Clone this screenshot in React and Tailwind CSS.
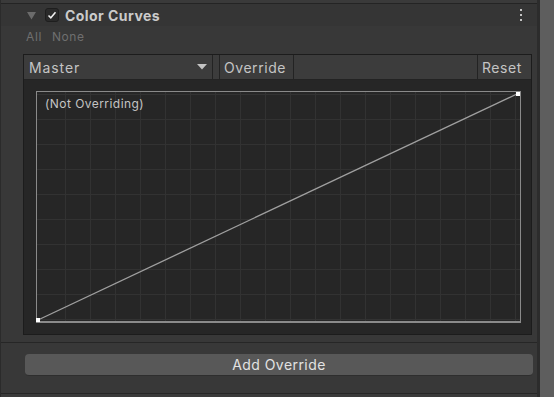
import React from "react"

const font = { fontFamily: "Inter, 'Noto Sans', sans-serif" }

function CurveGraph() {
  const vLines = []
  for (let k = 0; k <= 18; k++) vLines.push(29 + 25 * k)
  const hLines = []
  for (let k = 0; k <= 9; k++) hLines.push(3 + 25 * k)

  return (
    <div className="relative w-[485px] h-[232px]">
      <svg width="485" height="232" viewBox="0 0 485 232" className="block">
        <rect x="0" y="0" width="485" height="232" fill="#262626" />
        {vLines.map(x => (
          <line key={"v" + x} x1={x + 0.5} y1="0" x2={x + 0.5} y2="232" stroke="#323232" strokeWidth="1" />
        ))}
        {hLines.map(y => (
          <line key={"h" + y} x1="0" y1={y + 0.5} x2="485" y2={y + 0.5} stroke="#323232" strokeWidth="1" />
        ))}
        <rect x="0.5" y="0.5" width="484" height="230.5" fill="none" stroke="#8a8a8a" strokeWidth="1" />
        <line x1="0" y1="231" x2="485" y2="231" stroke="#8a8a8a" strokeWidth="2" />
        <line x1="2" y1="229" x2="482" y2="2.5" stroke="#a0a0a0" strokeWidth="1.3" />
        <rect x="0" y="227" width="4" height="4" fill="#ffffff" />
        <rect x="480" y="1" width="4" height="4" fill="#ffffff" />
      </svg>
      <span className="absolute left-[9px] top-[4px] text-[12px] text-[#c4c4c4] tracking-[0.45px]">(Not Overriding)</span>
    </div>
  )
}

function App() {
  return (
    <div className="w-[554px] h-[397px] flex bg-[#383838] overflow-hidden" style={font}>
      {/* inspector column */}
      <div className="w-[537px] h-full flex flex-col border-l border-[#2b2b2b]">
        <div className="h-[3px] bg-[#3a3a3a]" />
        <div className="h-[1px] bg-[#242424]" />

        {/* header */}
        <div className="h-[22px] bg-[#353535] flex items-center relative">
          <svg width="9" height="9" viewBox="0 0 9 9" className="ml-[26px]">
            <polygon points="0,1 9,1 4.5,8.5" fill="#6b6b6b" />
          </svg>
          <div className="ml-[9px] w-[14px] h-[14px] rounded-[3px] bg-[#2a2a2a] border border-[#1e1e1e] flex items-center justify-center">
            <svg width="10" height="10" viewBox="0 0 10 10">
              <path d="M1.5 5.5 L3.8 7.8 L8.5 2.2" fill="none" stroke="#f0f0f0" strokeWidth="1.5" />
            </svg>
          </div>
          <span className="ml-[6px] text-[14px] font-bold text-[#cbcbcb] tracking-[0.45px]">Color Curves</span>
          <div className="ml-auto mr-[15px] flex flex-col gap-[3px]">
            <div className="w-[2px] h-[2px] bg-[#c4c4c4]" />
            <div className="w-[2px] h-[2px] bg-[#c4c4c4]" />
            <div className="w-[2px] h-[2px] bg-[#c4c4c4]" />
          </div>
        </div>

        {/* All / None */}
        <div className="h-[20px] flex items-center gap-[10px] pl-[25px] pt-[1px] text-[12px] text-[#6f6f6f] tracking-[0.6px]">
          <span>All</span>
          <span>None</span>
        </div>

        {/* curves panel */}
        <div className="mt-[8px] ml-[22px] w-[509px] h-[281px] border border-[#1c1c1c] bg-[#262626] flex flex-col">
          <div className="h-[25px] bg-[#3c3c3c] border-b border-[#232323] flex text-[14px] text-[#c4c4c4] tracking-[0.55px]">
            <div className="w-[189px] flex items-center pl-[5px] border-r border-[#232323]">
              <span className="tracking-[0.9px]">Master</span>
              <svg width="10" height="6" viewBox="0 0 10 6" className="ml-auto mr-[5px]">
                <polygon points="0,0 10,0 5,5.5" fill="#c4c4c4" />
              </svg>
            </div>
            <div className="w-[6px]" />
            <div className="w-[75px] flex items-center pl-[4px] border-l border-r border-[#232323]">Override</div>
            <div className="flex-1" />
            <div className="w-[54px] flex items-center pl-[4px] border-l border-[#232323]">Reset</div>
          </div>
          <div className="pl-[12px] pt-[11px]">
            <CurveGraph />
          </div>
        </div>

        <div className="mt-[7px] h-[1px] bg-[#262626]" />

        {/* add override */}
        <div className="h-[50px] pt-[11px] pl-[24px]">
          <div className="w-[508px] h-[22px] rounded-[4px] bg-[#585858] border-b border-[#2e2e2e] flex items-center justify-center text-[14px] text-[#e2e2e2] tracking-[0.45px]">
            Add Override
          </div>
        </div>

        <div className="h-[1px] bg-[#262626]" />
        <div className="flex-1 bg-[#3a3a3a]" />
      </div>

      {/* scrollbar */}
      <div className="w-[3px] h-full bg-[#2c2c2c]" />
      <div className="w-[14px] h-full bg-[#5e5e5e]" />
    </div>
  )
}

export default App
